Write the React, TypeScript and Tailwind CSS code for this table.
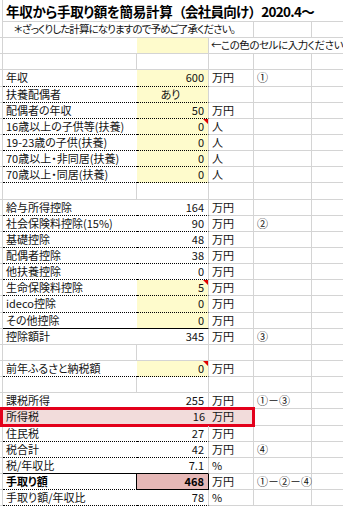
import React from "react";

type Bottom = "dotted" | "black" | "grey";

type RowProps = {
  label?: string;
  value?: string;
  unit?: string;
  note?: string;
  yellow?: boolean;
  bottom?: Bottom;
  marker?: boolean;
  center?: boolean;
  hideBC?: boolean;
  bold?: boolean;
};

const Marker = () => (
  <svg className="absolute right-0 top-0" width="5" height="5" viewBox="0 0 5 5">
    <polygon points="0,0 5,0 5,5" fill="#e00000" />
  </svg>
);

function Row({
  label,
  value,
  unit,
  note,
  yellow,
  bottom = "grey",
  marker,
  center,
  hideBC = true,
  bold,
}: RowProps) {
  let bCls = "";
  let cCls = "";
  if (bottom === "dotted") {
    bCls = "border-b border-dotted border-black";
    cCls = "border-r border-b border-r-[#d4d4d4] border-b-black [border-bottom-style:dotted]";
  } else if (bottom === "black") {
    bCls = "border-b border-black";
    cCls = "border-r border-b border-r-[#d4d4d4] border-b-black";
  } else {
    bCls = hideBC ? "border-b border-[#d4d4d4]" : "border-b border-r border-[#d4d4d4]";
    cCls = "border-r border-b border-[#d4d4d4]";
  }
  return (
    <div className="flex h-[16.15px]">
      <div className="w-[3px] shrink-0 border-r border-b border-[#d4d4d4]" />
      <div
        className={`w-[134px] shrink-0 flex items-center pl-[3px] whitespace-nowrap ${bCls} ${
          bold ? "font-bold" : ""
        }`}
      >
        {label}
      </div>
      <div
        className={`relative w-[72px] shrink-0 flex items-center pr-[4px] ${cCls} ${
          center ? "justify-center pr-0" : "justify-end"
        } ${yellow ? "bg-[#fefbcc]" : ""}`}
      >
        {value}
        {marker && <Marker />}
      </div>
      <div className="w-[45px] shrink-0 flex items-center pl-[3px] border-r border-b border-[#d4d4d4]">
        {unit}
      </div>
      <div className="w-[58px] shrink-0 flex items-center pl-[3px] border-r border-b border-[#d4d4d4] whitespace-nowrap">
        {note}
      </div>
      <div className="flex-1 border-b border-[#d4d4d4]" />
    </div>
  );
}

function EmptyRow() {
  return <Row hideBC={false} />;
}

export default function App() {
  return (
    <div className="w-[343px] h-[509px] overflow-hidden bg-white text-[11px] leading-none text-[#111] font-['Noto_Sans_CJK_JP','Noto_Sans',sans-serif] [font-feature-settings:'palt']">
      {/* Title row */}
      <div className="flex h-[22px]">
        <div className="w-[3px] shrink-0 border-r border-[#d4d4d4]" />
        <div className="flex-1 flex items-center pl-[3px] pt-[3px] border-b border-[#d4d4d4] whitespace-nowrap text-[13.5px] font-bold text-black">
          <span className="tracking-[-0.3px]">年収から手取り額を簡易計算</span>
          <span className="[font-feature-settings:normal] tracking-[-0.8px]">（会社員向け）</span>
          <span className="tracking-[-0.7px]">2020.4～</span>
        </div>
      </div>

      {/* Row 2: note */}
      <div className="flex h-[16.15px]">
        <div className="w-[3px] shrink-0 border-r border-b border-[#d4d4d4]" />
        <div className="w-[251px] shrink-0 flex items-center pl-[11px] border-r border-b border-[#d4d4d4] whitespace-nowrap text-[10.5px] tracking-[-0.9px]">
          ＊ざっくりした計算になりますので予めご了承ください。
        </div>
        <div className="w-[58px] shrink-0 border-r border-b border-[#d4d4d4]" />
        <div className="flex-1 border-b border-[#d4d4d4]" />
      </div>

      {/* Row 3: legend */}
      <div className="flex h-[16.15px]">
        <div className="w-[3px] shrink-0 border-r border-b border-[#d4d4d4]" />
        <div className="w-[134px] shrink-0 border-b border-[#d4d4d4]" />
        <div className="w-[72px] shrink-0 bg-[#fefbcc] border-r border-b border-[#d4d4d4]" />
        <div className="flex-1 flex items-center pl-[2px] border-b border-[#d4d4d4] whitespace-nowrap text-[10.5px] tracking-[-0.45px]">
          ←この色のセルに入力ください
        </div>
      </div>

      <EmptyRow />

      <Row label="年収" value="600" unit="万円" note="①" yellow bottom="dotted" />
      <Row label="扶養配偶者" value="あり" yellow center bottom="dotted" />
      <Row label="配偶者の年収" value="50" unit="万円" yellow bottom="dotted" />
      <Row label="16歳以上の子供等(扶養)" value="0" unit="人" yellow marker bottom="dotted" />
      <Row label="19-23歳の子供(扶養)" value="0" unit="人" yellow bottom="dotted" />
      <Row label="70歳以上・非同居(扶養)" value="0" unit="人" yellow bottom="dotted" />
      <Row label="70歳以上・同居(扶養)" value="0" unit="人" yellow bottom="dotted" />

      <EmptyRow />

      <Row label="給与所得控除" value="164" unit="万円" bottom="dotted" />
      <Row label="社会保険料控除(15%)" value="90" unit="万円" note="②" bottom="dotted" />
      <Row label="基礎控除" value="48" unit="万円" bottom="dotted" />
      <Row label="配偶者控除" value="38" unit="万円" bottom="dotted" />
      <Row label="他扶養控除" value="0" unit="万円" bottom="dotted" />
      <Row label="生命保険料控除" value="5" unit="万円" yellow marker bottom="dotted" />
      <Row label="ideco控除" value="0" unit="万円" yellow bottom="dotted" />
      <Row label="その他控除" value="0" unit="万円" yellow bottom="black" />
      <Row label="控除額計" value="345" unit="万円" note="③" />

      <EmptyRow />

      <Row label="前年ふるさと納税額" value="0" unit="万円" yellow marker bottom="dotted" />

      <EmptyRow />

      <Row label="課税所得" value="255" unit="万円" note="①－③" />

      {/* 所得税 row with red highlight */}
      <div className="relative flex h-[16.15px]">
        <div className="w-[3px] shrink-0 border-r border-b border-[#d4d4d4]" />
        <div className="w-[134px] shrink-0 flex items-center pl-[3px] bg-[#f2dcdb] border-b border-[#d4d4d4]">
          所得税
        </div>
        <div className="w-[72px] shrink-0 flex items-center justify-end pr-[4px] bg-[#f2dcdb] border-b border-[#d4d4d4]">
          16
        </div>
        <div className="w-[45px] shrink-0 flex items-center pl-[3px] bg-[#f2dcdb] border-r border-b border-[#d4d4d4]">
          万円
        </div>
        <div className="w-[58px] shrink-0 border-r border-b border-[#d4d4d4]" />
        <div className="flex-1 border-b border-[#d4d4d4]" />
        <div className="pointer-events-none absolute left-0 top-[-2px] bottom-[-1px] w-[255px] border-[3px] border-[#e3001b]" />
      </div>

      <Row label="住民税" value="27" unit="万円" bottom="dotted" />
      <Row label="税合計" value="42" unit="万円" note="④" bottom="dotted" />
      <Row label="税/年収比" value="7.1" unit="%" bottom="black" />

      {/* 手取り額 row */}
      <div className="flex h-[16.15px]">
        <div className="w-[3px] shrink-0 border-r border-b border-[#d4d4d4]" />
        <div className="w-[134px] shrink-0 flex items-center pl-[3px] font-bold text-black border-r border-b border-r-black border-b-black [border-bottom-style:dotted]">
          手取り額
        </div>
        <div className="w-[72px] shrink-0 flex items-center justify-end pr-[4px] font-bold text-black bg-[#e6b8b7] border-r border-b border-black">
          468
        </div>
        <div className="w-[45px] shrink-0 flex items-center pl-[3px] border-r border-b border-[#d4d4d4]">
          万円
        </div>
        <div className="w-[58px] shrink-0 flex items-center pl-[3px] border-r border-b border-[#d4d4d4] whitespace-nowrap">
          ①－②－④
        </div>
        <div className="flex-1 border-b border-[#d4d4d4]" />
      </div>

      <Row label="手取り額/年収比" value="78" unit="%" bottom="dotted" />
    </div>
  );
}
